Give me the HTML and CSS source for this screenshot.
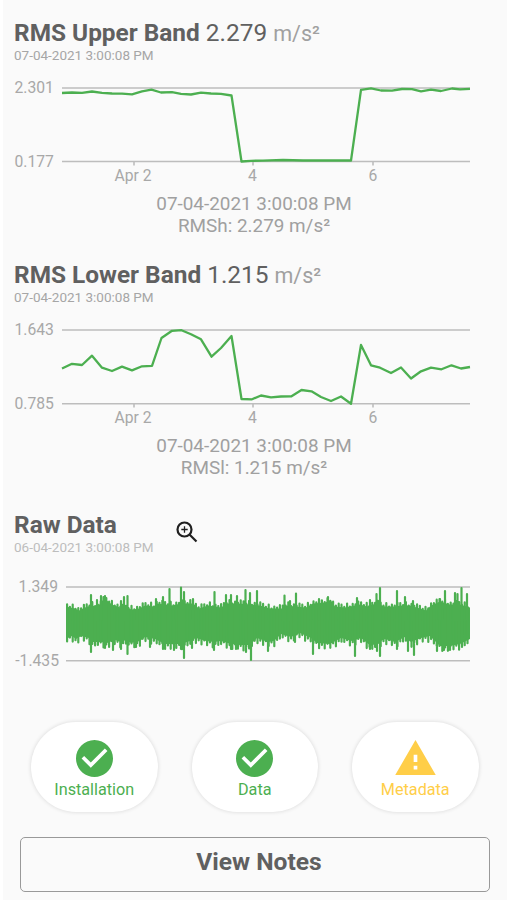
FILE: index.html
```html
<!DOCTYPE html>
<html lang="en">
<head>
<meta charset="utf-8">
<title>Sensor Readings</title>
<link rel="stylesheet" href="styles.css">
</head>
<body>
<main class="screen">
  <section class="band">
    <h2 class="title">RMS Upper Band <span class="value">2.279</span> <span class="unit">m/s²</span></h2>
    <p class="stamp">07-04-2021 3:00:08 PM</p>
    <svg class="chart" viewBox="0 70 504 116">
      <path class="grid" d="M59 88H467M59 161.5H467M131 161v4.500M250 161v4.500M370 161v4.500"/>
      <polyline class="line" points="59,93 69,92.500 79,92.800 89,91.500 99,92.800 109,93.500 119,93.600 129,94.300 139,91.300 148.500,89.600 158,92.500 169,92.200 178,93.800 188,94.500 198,92.600 208,93.500 218,93.800 228.500,95.500 238.500,161.500 248,160.800 260,160.700 280,160 300,160.500 348,160.500 358,89.800 368,88.300 378,90.500 389,90.600 399,89 409,89.100 418,91.300 428,89.600 438,91 449,88.500 457,89.400 467,88.800"/>
      <g class="tick">
        <text x="11.500" y="93">2.301</text><text x="11.500" y="166.500">0.177</text>
        <text class="mid" x="130" y="180.500">Apr 2</text><text class="mid" x="249.500" y="180.500">4</text><text class="mid" x="370" y="180.500">6</text>
      </g>
    </svg>
    <p class="caption">07-04-2021 3:00:08 PM<br>RMSh: 2.279 m/s²</p>
  </section>
  <section class="band">
    <h2 class="title">RMS Lower Band <span class="value">1.215</span> <span class="unit">m/s²</span></h2>
    <p class="stamp">07-04-2021 3:00:08 PM</p>
    <svg class="chart" viewBox="0 312 504 116">
      <path class="grid" d="M59 330H467M59 403.700H467M131 403v4.500M250 403v4.500M370 403v4.500"/>
      <polyline class="line" points="59,368.500 69,363.800 79,365 89,355.700 99,367.700 109,371 119,366.600 129,370.400 139,366.300 149,365.800 158.500,338 169,330.800 178.500,330.200 188,334.200 198,339.300 208.500,356.700 218,348 228.500,336 238.500,399 249,399.300 258,395.500 268,397.300 278,396.500 288.500,396.300 298.500,390 308.500,391.300 318,397 328,401 338,396.500 348,403.800 358,345 368,365.300 377,367.700 388,373 398,367.500 408,378.500 418,371.300 428,367.700 438.500,369.300 448.500,365.300 458,368.500 467,367"/>
      <g class="tick">
        <text x="11.500" y="335">1.643</text><text x="11.500" y="408.500">0.785</text>
        <text class="mid" x="130" y="422.500">Apr 2</text><text class="mid" x="249.500" y="422.500">4</text><text class="mid" x="370" y="422.500">6</text>
      </g>
    </svg>
    <p class="caption">07-04-2021 3:00:08 PM<br>RMSl: 1.215 m/s²</p>
  </section>
  <section class="raw">
    <header class="raw-head">
      <div>
        <h2 class="title">Raw Data</h2>
        <p class="stamp pale">06-04-2021 3:00:08 PM</p>
      </div>
      <svg class="zoom" viewBox="0 0 22 22"><circle cx="8.500" cy="8.500" r="7"/><path d="M13.500 13.500L20.500 20.500"/><path class="plus" d="M5.300 8.500h6.400M8.500 5.300v6.400"/></svg>
    </header>
    <svg class="chart" viewBox="0 570 504 116">
      <path class="grid" d="M63 587H467M63 660.700H467"/>
      <path class="body" id="body"/>
      <path class="wave" id="wave"/>
      <g class="tick"><text class="end" x="55" y="592">1.349</text><text class="end" x="56" y="665.500">-1.435</text></g>
    </svg>
  </section>
  <nav class="states">
    <div class="state">
      <svg class="icon" viewBox="2 2 20 20"><path d="M12 2C6.480 2 2 6.480 2 12s4.480 10 10 10 10-4.480 10-10S17.520 2 12 2zm-2 15l-5-5 1.410-1.410L10 14.170l7.590-7.590L19 8l-9 9z"/></svg>
      Installation
    </div>
    <div class="state">
      <svg class="icon" viewBox="2 2 20 20"><path d="M12 2C6.480 2 2 6.480 2 12s4.480 10 10 10 10-4.480 10-10S17.520 2 12 2zm-2 15l-5-5 1.410-1.410L10 14.170l7.590-7.590L19 8l-9 9z"/></svg>
      Data
    </div>
    <div class="state warn">
      <svg class="icon wide" viewBox="1 2 22 19"><path d="M1 21h22L12 2 1 21zm12-3h-2v-2h2v2zm0-4h-2v-4h2v4z"/></svg>
      Metadata
    </div>
  </nav>
  <button class="notes">View Notes</button>
</main>
<script src="wave.js"></script>
</body>
</html>
```
FILE: styles.css
```css
* { box-sizing: border-box; }
body { margin: 0; background: #fff; font-family: Roboto, sans-serif; color: #a0a0a0; }
h2, p { margin: 0; }
.screen { height: 900px; margin-left: 3px; background: #fafafa; overflow: hidden; }
.band { height: 242px; padding-top: 19px; }
.title { padding-left: 11px; font-size: 24.4px; line-height: 28px; height: 28px; font-weight: 700; color: #606060; white-space: nowrap; }
.value { font-weight: 400; }
.unit { font-weight: 400; font-size: 21.5px; color: #a0a0a0; }
.stamp { padding-left: 11px; font-size: 13.500px; line-height: 16px; height: 23px; color: #a6a6a6; white-space: nowrap; }
.pale { color: #bdbdbd; }
.chart { display: block; width: 504px; height: 116px; }
.grid { fill: none; stroke: #bdbdbd; stroke-width: 1.6; }
.line { fill: none; stroke: #4caf50; stroke-width: 2.3; stroke-linejoin: round; }
.body { fill: #4caf50; }
.wave { fill: none; stroke: #4caf50; stroke-width: 2.2; stroke-linecap: round; }
.tick { font-size: 15.700px; fill: #a8a8a8; }
.mid { text-anchor: middle; }
.end { text-anchor: end; }
.caption { width: 502px; margin-top: 7px; text-align: center; font-size: 18.900px; line-height: 22px; }
.raw { height: 238px; padding-top: 27px; }
.raw-head { display: flex; gap: 22px; height: 59px; }
.zoom { width: 22px; height: 22px; margin-top: 10px; fill: none; stroke: #202020; stroke-width: 2.2; }
.plus { stroke-width: 1.3; }
.states { display: flex; gap: 34px; padding-left: 28px; }
.state { width: 126.500px; height: 90px; border-radius: 45px; background: #fff; box-shadow: 0 0 4px rgba(0,0,0,.14); display: flex; flex-direction: column; align-items: center; padding-top: 18px; font-size: 16.200px; line-height: 22px; color: #4caf50; }
.icon { width: 37px; height: 37px; margin-bottom: 2px; fill: currentColor; }
.wide { width: 41px; height: 35px; margin-bottom: 4px; }
.warn { color: #ffce48; }
.notes { display: block; width: 470px; height: 55px; margin: 25px 0 0 17px; padding: 0 0 6px 8px; border: 1.500px solid #999; border-radius: 5px; background: transparent; font: 700 24.600px Roboto, sans-serif; color: #606060; }
```
FILE: wave.js
```js
// Envelope of the raw signal: [x, y] samples along the upper and lower edges.
const upper = [[63,603],[72,605],[76,607],[82,604],[88,602],[95,603],[99,597],[104,597],[109,601],[117,604],[130,606],[136,605],[142,602],[151,603],[154,600],[162,601],[169,602],[178,600],[184,600],[190,600],[196,605],[205,602],[212,603],[218,604],[224,600],[236,600],[247,601],[257,602],[267,605],[279,605],[283,602],[292,603],[303,604],[310,600],[322,599],[328,597],[332,603],[342,604],[352,602],[357,601],[364,603],[373,600],[382,603],[392,603],[398,602],[407,602],[417,605],[423,607],[428,602],[437,598],[447,601],[457,601],[467,604]];
const lower = [[63,643],[69,640],[73,643],[78,640],[86,642],[89,646],[98,646],[104,647],[112,644],[118,646],[123,644],[128,647],[137,645],[142,641],[152,643],[162,648],[170,648],[178,648],[187,645],[193,642],[203,645],[211,646],[218,645],[228,648],[237,649],[247,649],[254,642],[265,646],[271,645],[278,638],[288,641],[297,637],[308,642],[314,647],[327,648],[338,642],[349,645],[358,642],[368,650],[382,643],[392,646],[402,641],[408,646],[418,642],[427,640],[437,650],[447,650],[457,648],[467,643]];
const peaks = [[88,594],[94,599],[98,595],[102,595],[118,600],[121,596],[124.500,595],[153,598],[160,596],[166.500,588],[178,586.500],[181,591],[190,598],[211.500,591],[223,594],[228,594],[234,595],[242.500,589],[247,592],[254,590],[281.500,594.500],[287,600],[293,592.500],[316,598],[325,596],[354,597],[367,599],[373.500,593],[377,587],[394,590],[402,596],[410,600],[437,598],[442,590],[452,592],[454.500,593],[458.500,587],[464,593]];
const dips = [[88,653],[102,649],[110,651],[118,650],[124.500,655],[133,648],[147,648],[160,650],[171,651],[181,659],[178,650],[189,649],[211,651],[228,650],[233,650],[243,653],[248,661],[265,652],[292,643],[310,655],[352,657],[367,650],[377,657],[374,652],[394,650],[405,652],[411,656],[434,652],[441,651],[447,651],[459,648]];

function at(points, x) {
  let i = 1;
  while (i < points.length - 1 && points[i][0] < x) i++;
  const [x0, y0] = points[i - 1], [x1, y1] = points[i];
  return y0 + (y1 - y0) * (x - x0) / (x1 - x0);
}

const inner = upper.map(([x, y]) => `${x} ${y + 3.5}`)
  .concat(lower.slice().reverse().map(([x, y]) => `${x} ${y - 4}`));
document.getElementById('body').setAttribute('d', 'M' + inner.join('L') + 'z');

let d = '', n = 0;
for (let x = 64.1; x < 467; x += 2.8, n++) {
  const a = at(upper, x) + [1, 3, 0, 3.6, 1.5, 2.5, 0.2][n % 7];
  const b = at(lower, x) + [-1, -3.5, 1, -2.5, 0.8, -4, 0, -3, 1.5, -2, -0.5][n % 11];
  d += `M${x} ${a}V${b}`;
}
for (const [x, y] of peaks) d += `M${x} ${y + 1}V620`;
for (const [x, y] of dips) d += `M${x} 620V${y - 1}`;
document.getElementById('wave').setAttribute('d', d);
```
